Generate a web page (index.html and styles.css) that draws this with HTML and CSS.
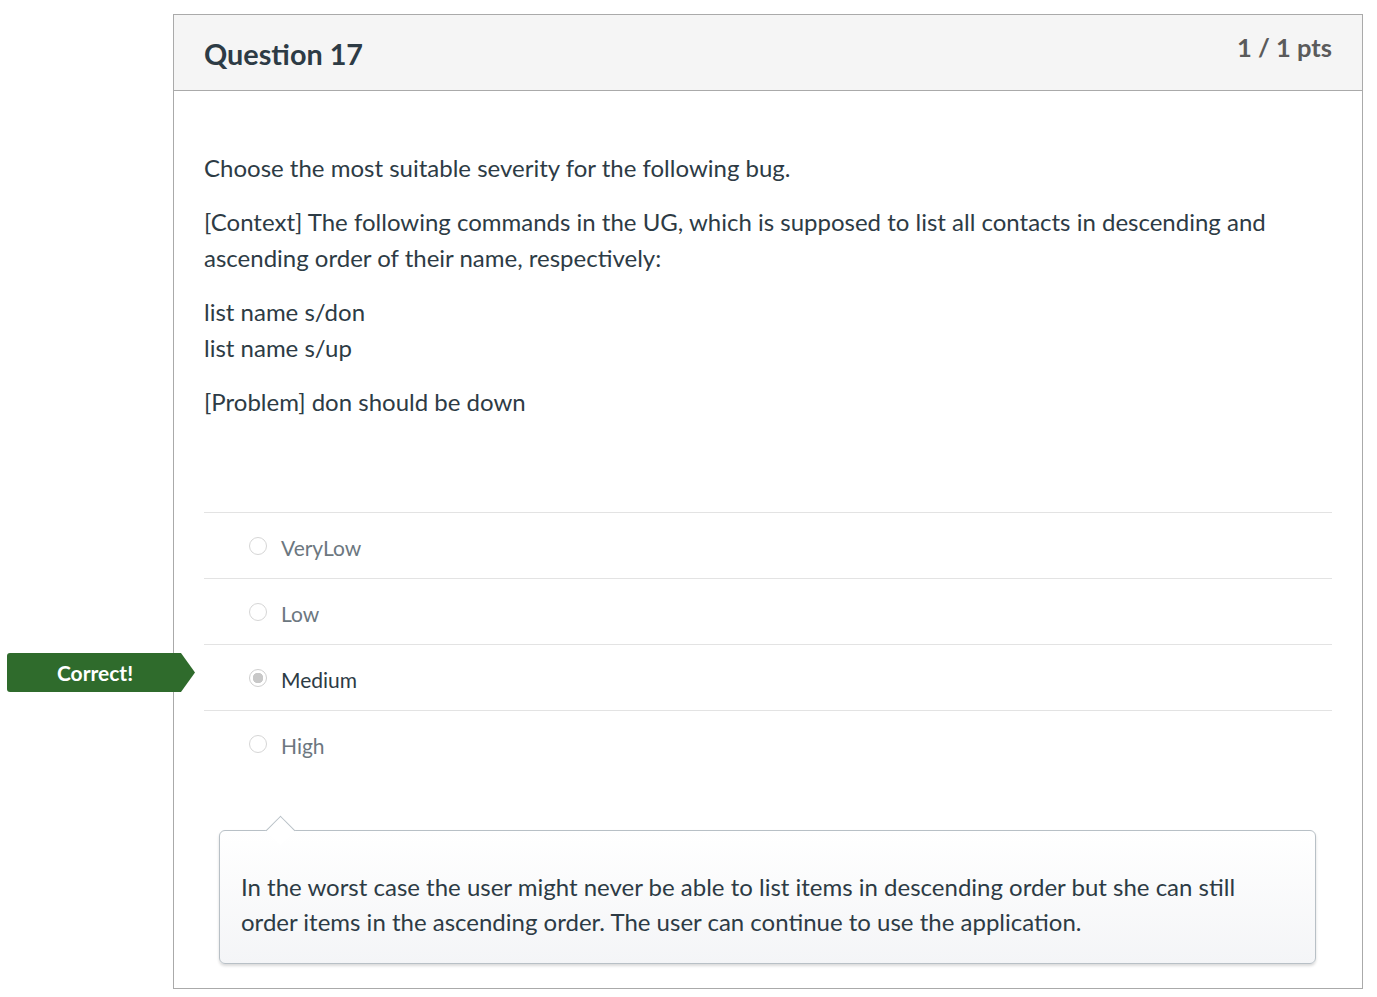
FILE: index.html
```html
<!DOCTYPE html>
<html lang="en">
<head>
<meta charset="utf-8">
<title>Question 17</title>
<link rel="stylesheet" href="styles.css">
</head>
<body>
<div class="page">
  <div class="card">
    <div class="card-header">
      <h2 class="q-title">Question 17</h2>
      <div class="q-points">1 / 1 pts</div>
    </div>
    <div class="card-body">
      <div class="q-text">
        <p>Choose the most suitable severity for the following bug.</p>
        <p>[Context] The following commands in the UG, which is supposed to list all contacts in descending and ascending order of their name, respectively:</p>
        <p>list name s/don<br>list name s/up</p>
        <p>[Problem] don should be down</p>
      </div>
      <div class="answers">
        <div class="answer">
          <span class="radio"></span><span class="answer-label">VeryLow</span>
        </div>
        <div class="answer">
          <span class="radio"></span><span class="answer-label">Low</span>
        </div>
        <div class="answer selected">
          <span class="correct-flag">Correct!</span>
          <span class="radio checked"></span><span class="answer-label">Medium</span>
        </div>
        <div class="answer">
          <span class="radio"></span><span class="answer-label">High</span>
        </div>
      </div>
      <div class="comment">
        <p>In the worst case the user might never be able to list items in descending order but she can still order items in the ascending order. The user can continue to use the application.</p>
      </div>
    </div>
  </div>
</div>
</body>
</html>
```
FILE: styles.css
```css
html, body {
  margin: 0;
  padding: 0;
  background: #ffffff;
}

body {
  font-family: Lato, "Open Sans", "Liberation Sans", sans-serif;
  color: #2d3b45;
}

.page {
  padding: 14px 14px 8px 173px;
}

.card {
  width: 1188px;
  border: 1px solid #aaaaaa;
  background: #ffffff;
}

.card-header {
  display: flex;
  justify-content: space-between;
  align-items: flex-start;
  height: 75px;
  padding: 0 30px;
  background: #f5f5f5;
  border-bottom: 1px solid #aaaaaa;
}

.q-title {
  margin: 0;
  padding-top: 21px;
  font-size: 28.8px;
  line-height: 36px;
  font-weight: 700;
  color: #2d3b45;
}

.q-points {
  padding-top: 16px;
  font-size: 25.5px;
  line-height: 32px;
  font-weight: 700;
  color: #5b5b5b;
}

.card-body {
  padding: 59px 30px 24px 30px;
}

.q-text {
  font-size: 24px;
  line-height: 36px;
}

.q-text p {
  margin: 0 0 18px 0;
}

.answers {
  margin-top: 92px;
}

.answer {
  position: relative;
  display: flex;
  align-items: center;
  height: 65px;
  border-top: 1px solid #e3e3e3;
  padding-left: 45px;
  font-size: 21px;
  color: #6c7780;
}

.answer.selected {
  color: #2d3b45;
}

.radio {
  box-sizing: border-box;
  width: 18px;
  height: 18px;
  border-radius: 50%;
  border: 1px solid #d6d6d6;
  background: #ffffff;
  margin-right: 14px;
  margin-top: 1px;
}

.radio.checked {
  border-color: #cfcfcf;
  background: radial-gradient(circle, #c8c8c8 0 5px, #ffffff 5.5px);
}

.answer-label {
  line-height: 30px;
  padding-top: 4px;
}

.correct-flag {
  position: absolute;
  left: -197px;
  top: 8px;
  width: 188px;
  height: 39px;
  box-sizing: border-box;
  padding-right: 12px;
  display: flex;
  align-items: center;
  justify-content: center;
  background: #2f6b2c;
  color: #ffffff;
  font-size: 21px;
  font-weight: 700;
  border-radius: 3px 0 0 3px;
  clip-path: polygon(0 0, calc(100% - 14px) 0, 100% 50%, calc(100% - 14px) 100%, 0 100%);
}

.comment {
  position: relative;
  margin: 54px 16px 0 15px;
  padding: 38px 21px 24px 21px;
  border: 1px solid #b8c0c6;
  border-radius: 6px;
  background: linear-gradient(#ffffff, #f4f5f7);
  box-shadow: 0 2px 3px rgba(0, 0, 0, 0.15);
  font-size: 24px;
  line-height: 35px;
}

.comment::before {
  content: "";
  position: absolute;
  top: -11px;
  left: 50px;
  width: 20px;
  height: 20px;
  background: #ffffff;
  border-left: 1px solid #b8c0c6;
  border-top: 1px solid #b8c0c6;
  transform: rotate(45deg);
}

.comment p {
  margin: 0;
}
```
